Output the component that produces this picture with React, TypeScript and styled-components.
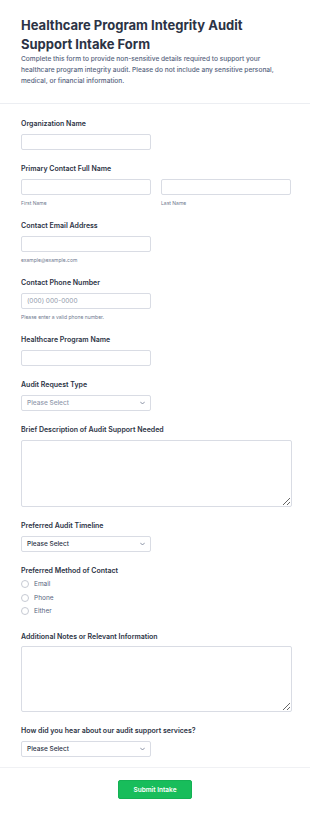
import React from "react";
import styled, { createGlobalStyle } from "styled-components";

const GlobalStyle = createGlobalStyle`
  html, body { margin: 0; padding: 0; background: #ffffff; }
  body { font-family: Inter, "Noto Sans", Arial, sans-serif; -webkit-font-smoothing: antialiased; }
  * { box-sizing: border-box; }
`;

const Page = styled.div`
  width: 310px;
  min-height: 817px;
  background: #ffffff;
  display: flex;
  flex-direction: column;
`;

const Header = styled.header`
  padding: 16px 19px 16px 21px;
  border-bottom: 1px solid #eceef2;
`;

const Title = styled.h1`
  margin: 0;
  font-size: 13px;
  line-height: 19px;
  font-weight: 700;
  color: #2c3345;
`;

const Description = styled.p`
  margin: 0;
  font-size: 6.6px;
  line-height: 11px;
  font-weight: 500;
  color: #57647e;
`;

const Fields = styled.div`
  display: flex;
  flex-direction: column;
  gap: 14px;
  padding: 15px 18px 10px 21px;
  border-bottom: 1px solid #f0f1f4;
`;

const Field = styled.div`
  display: flex;
  flex-direction: column;
`;

const Label = styled.label<{ $mb?: number }>`
  font-size: 7px;
  line-height: 10px;
  font-weight: 600;
  color: #2c3345;
  margin-bottom: ${(p) => p.$mb ?? 5}px;
`;

const Row = styled.div`
  display: flex;
  gap: 10px;
`;

const Col = styled.div`
  display: flex;
  flex-direction: column;
  width: 130px;
`;

const Input = styled.input`
  width: 130px;
  height: 16px;
  border: 1px solid #d9dce4;
  border-radius: 2px;
  background: #fff;
  padding: 0 5px;
  font-family: inherit;
  font-size: 6.5px;
  color: #2c3345;
  outline: none;
  &::placeholder { color: #8f98aa; }
`;

const TextArea = styled.textarea<{ $h: number }>`
  width: 271px;
  height: ${(p) => p.$h}px;
  margin: 0;
  border: 1px solid #d9dce4;
  border-radius: 2px;
  background: #fff;
  font-family: inherit;
  outline: none;
  display: block;
`;

const SelectBox = styled.div<{ $placeholder?: boolean }>`
  width: 130px;
  height: 16px;
  border: 1px solid #d9dce4;
  border-radius: 2px;
  background: #fff;
  padding: 0 5px 0 5px;
  display: flex;
  align-items: center;
  justify-content: space-between;
  font-size: 6.5px;
  font-weight: 500;
  color: ${(p) => (p.$placeholder ? "#8f98aa" : "#2c3345")};
`;

const Sub = styled.span`
  font-size: 5px;
  line-height: 8px;
  color: #6f7a8f;
  margin-top: 4px;
`;

const RadioList = styled.div`
  display: flex;
  flex-direction: column;
  margin-top: 1.5px;
`;

const RadioRow = styled.label`
  display: flex;
  align-items: center;
  gap: 5px;
  height: 13.5px;
  font-size: 6.5px;
  color: #57647e;
`;

const Circle = styled.span`
  width: 8px;
  height: 8px;
  border-radius: 50%;
  border: 1px solid #c6cad3;
  background: #fff;
`;

const Footer = styled.div`
  display: flex;
  justify-content: center;
  padding: 12px 0 17px;
`;

const SubmitButton = styled.button`
  width: 74px;
  height: 19px;
  background: #18bd5b;
  color: #fff;
  border: 1px solid #14b154;
  border-radius: 2px;
  font-family: inherit;
  font-size: 6.5px;
  font-weight: 600;
  cursor: pointer;
`;

const Chevron = () => (
  <svg width="5" height="4" viewBox="0 0 10 6" fill="none">
    <path d="M1 1l4 4 4-4" stroke="#6f7a8f" strokeWidth="1.6" strokeLinecap="round" strokeLinejoin="round" />
  </svg>
);

const Select = ({ placeholder }: { placeholder?: boolean }) => (
  <SelectBox $placeholder={placeholder}>
    <span>Please Select</span>
    <Chevron />
  </SelectBox>
);

export default function App() {
  return (
    <Page>
      <GlobalStyle />
      <Header>
        <Title>Healthcare Program Integrity Audit Support Intake Form</Title>
        <Description>
          Complete this form to provide non-sensitive details required to support your healthcare
          program integrity audit. Please do not include any sensitive personal, medical, or
          financial information.
        </Description>
      </Header>
      <Fields>
        <Field>
          <Label>Organization Name</Label>
          <Input />
        </Field>
        <Field>
          <Label>Primary Contact Full Name</Label>
          <Row>
            <Col>
              <Input />
              <Sub>First Name</Sub>
            </Col>
            <Col>
              <Input />
              <Sub>Last Name</Sub>
            </Col>
          </Row>
        </Field>
        <Field>
          <Label>Contact Email Address</Label>
          <Input />
          <Sub>example@example.com</Sub>
        </Field>
        <Field>
          <Label>Contact Phone Number</Label>
          <Input placeholder="(000) 000-0000" />
          <Sub>Please enter a valid phone number.</Sub>
        </Field>
        <Field>
          <Label>Healthcare Program Name</Label>
          <Input />
        </Field>
        <Field>
          <Label>Audit Request Type</Label>
          <Select placeholder />
        </Field>
        <Field>
          <Label>Brief Description of Audit Support Needed</Label>
          <TextArea $h={67} />
        </Field>
        <Field>
          <Label>Preferred Audit Timeline</Label>
          <Select />
        </Field>
        <Field>
          <Label $mb={0}>Preferred Method of Contact</Label>
          <RadioList>
            <RadioRow><Circle />Email</RadioRow>
            <RadioRow><Circle />Phone</RadioRow>
            <RadioRow><Circle />Either</RadioRow>
          </RadioList>
        </Field>
        <Field>
          <Label $mb={4}>Additional Notes or Relevant Information</Label>
          <TextArea $h={66} />
        </Field>
        <Field>
          <Label>How did you hear about our audit support services?</Label>
          <Select />
        </Field>
      </Fields>
      <Footer>
        <SubmitButton>Submit Intake</SubmitButton>
      </Footer>
    </Page>
  );
}
